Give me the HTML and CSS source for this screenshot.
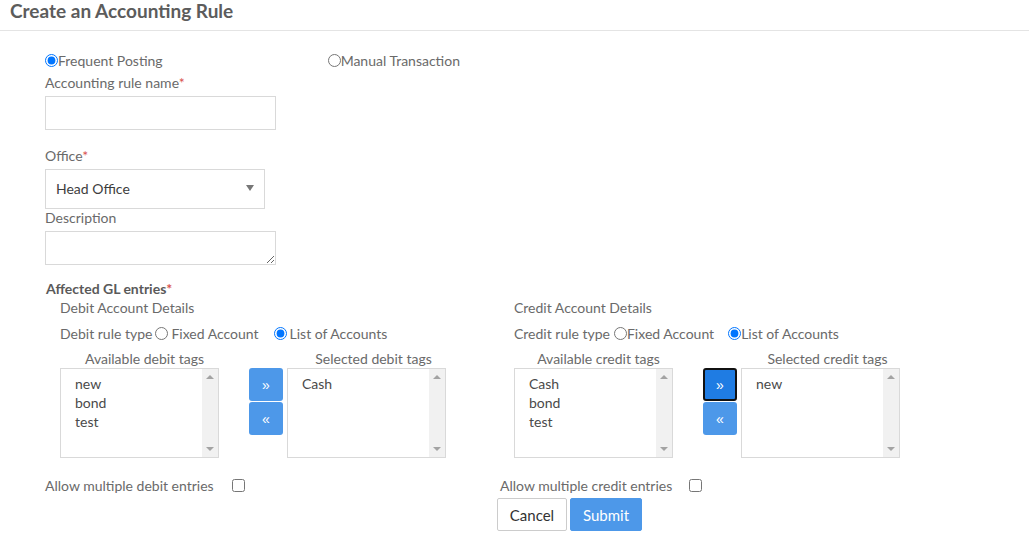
FILE: index.html
```html
<!DOCTYPE html>
<html>
<head>
<meta charset="utf-8">
<link rel="stylesheet" href="styles.css">
</head>
<body>
<header class="page-head"><h1>Create an Accounting Rule</h1></header>
<form class="form">
  <div class="type-row">
    <label class="radio-lbl"><input type="radio" name="t" checked>Frequent Posting</label>
    <label class="radio-lbl manual"><input type="radio" name="t">Manual Transaction</label>
  </div>
  <div class="lbl l-name">Accounting rule name<span class="req">*</span></div>
  <input class="txt" type="text">
  <div class="lbl l-office">Office<span class="req">*</span></div>
  <div class="select"><span>Head Office</span><span class="caret"></span></div>
  <div class="lbl l-desc">Description</div>
  <textarea class="area"></textarea>
  <div class="gl">Affected GL entries<span class="req">*</span></div>
  <div class="sides">
    <div class="side debit">
      <div class="sub">Debit Account Details</div>
      <div class="rule-row">Debit rule type<label class="r"><input type="radio" name="d">Fixed Account</label><label class="r second"><input type="radio" name="d" checked>List of Accounts</label></div>
      <div class="lists">
        <div class="col">
          <div class="cap">Available debit tags</div>
          <div class="box"><div class="items"><div>new</div><div>bond</div><div>test</div></div><div class="sb"><span class="up"></span><span class="dn"></span></div></div>
        </div>
        <div class="btns"><button type="button" class="mv">&raquo;</button><button type="button" class="mv">&laquo;</button></div>
        <div class="col">
          <div class="cap sel">Selected debit tags</div>
          <div class="box"><div class="items"><div>Cash</div></div><div class="sb"><span class="up"></span><span class="dn"></span></div></div>
        </div>
      </div>
    </div>
    <div class="side credit">
      <div class="sub">Credit Account Details</div>
      <div class="rule-row">Credit rule type<label class="r tight"><input type="radio" name="c">Fixed Account</label><label class="r second tight"><input type="radio" name="c" checked>List of Accounts</label></div>
      <div class="lists">
        <div class="col">
          <div class="cap">Available credit tags</div>
          <div class="box"><div class="items"><div>Cash</div><div>bond</div><div>test</div></div><div class="sb"><span class="up"></span><span class="dn"></span></div></div>
        </div>
        <div class="btns"><button type="button" class="mv focus">&raquo;</button><button type="button" class="mv">&laquo;</button></div>
        <div class="col">
          <div class="cap sel">Selected credit tags</div>
          <div class="box"><div class="items"><div>new</div></div><div class="sb"><span class="up"></span><span class="dn"></span></div></div>
        </div>
      </div>
    </div>
  </div>
  <div class="multi">
    <label class="chk debit-chk">Allow multiple debit entries<input type="checkbox"></label>
    <label class="chk credit-chk">Allow multiple credit entries<input type="checkbox"></label>
  </div>
  <div class="actions">
    <button type="button" class="btn cancel">Cancel</button>
    <button type="button" class="btn submit">Submit</button>
  </div>
</form>
</body>
</html>
```
FILE: styles.css
```css
* { box-sizing: border-box; }
body {
  margin: 0;
  font-family: Lato, "Noto Sans", sans-serif;
  font-size: 14px;
  color: #6a6a6a;
  background: #fff;
}
.page-head {
  height: 31px;
  border-bottom: 1px solid #e4e4e4;
  padding: 0 10px;
}
.page-head h1 {
  margin: 0;
  font-size: 19px;
  line-height: 22px;
  font-weight: 700;
  color: #5c5c5c;
}
.form { padding-left: 45px; }
.type-row {
  display: flex;
  margin-top: 19px;
  height: 20px;
  align-items: center;
}
.radio-lbl { display: flex; align-items: center; }
.radio-lbl input { margin: 0; width: 13px; height: 13px; }
.manual { margin-left: 165px; }
.lbl { line-height: 20px; }
.req { color: #d9534f; }
.l-name { margin-top: 3px; }
.txt {
  display: block;
  margin-top: 3px;
  width: 231px;
  height: 34px;
  border: 1px solid #d9d9d9;
  font: inherit;
}
.l-office { margin-top: 16px; }
.select {
  margin-top: 3px;
  width: 220px;
  height: 40px;
  border: 1px solid #d9d9d9;
  display: flex;
  align-items: center;
  justify-content: space-between;
  padding: 0 10px 2px 10px;
  color: #3d3d3d;
}
.caret {
  width: 0; height: 0;
  border-left: 4px solid transparent;
  border-right: 4px solid transparent;
  border-top: 6px solid #777;
}
.l-desc { margin-top: -1px; }
.area {
  display: block;
  margin-top: 3px;
  width: 231px;
  height: 34px;
  border: 1px solid #d9d9d9;
  font: inherit;
}
.gl {
  margin-top: 14px;
  margin-left: 1px;
  line-height: 20px;
  font-weight: 700;
  color: #5a5a5a;
}
.sides { display: flex; }
.debit { width: 469px; padding-left: 15px; }
.credit { padding-left: 0; }
.sub { line-height: 18px; margin-top: 0; }
.rule-row {
  display: flex;
  align-items: center;
  height: 20px;
  margin-top: 6px;
  white-space: nowrap;
}
.r { display: inline-flex; align-items: center; }
.r input { margin: 0 3px 0 3px; width: 13px; height: 13px; }
.r.tight input { margin: 0 0 0 4px; }
.r.second { margin-left: 12px; }
.r.second.tight { margin-left: 10px; }
.lists { display: flex; align-items: flex-start; margin-top: 7px; }
.col { width: 159px; }
.cap { text-align: center; line-height: 18px; padding-left: 10px; }
.cap.sel { padding-left: 14px; }
.box {
  margin-top: 0;
  height: 90px;
  border: 1px solid #d9d9d9;
  display: flex;
  color: #4a4a4a;
}
.items {
  flex: 1;
  padding: 5px 0 0 14px;
  line-height: 19px;
}
.sb {
  width: 16px;
  background: #f1f1f1;
  position: relative;
}
.sb span {
  position: absolute;
  left: 4px;
  width: 0; height: 0;
  border-left: 4px solid transparent;
  border-right: 4px solid transparent;
}
.sb .up { top: 6px; border-bottom: 4px solid #a3a3a3; }
.sb .dn { bottom: 6px; border-top: 4px solid #a3a3a3; }
.btns {
  display: flex;
  flex-direction: column;
  margin: 18px 4px 0 30px;
  gap: 1px;
}
.mv {
  width: 34px;
  height: 33px;
  border: 0;
  border-radius: 3px;
  background: #4d98e9;
  color: #fff;
  font-size: 14px;
  padding: 0;
  line-height: 1;
}
.mv.focus {
  background: #1f7ce3;
  border: 2px solid #111;
}
.multi {
  display: flex;
  margin-top: 17px;
  height: 20px;
  align-items: center;
}
.chk { display: flex; align-items: center; }
.chk input { margin: 0 0 0 18px; width: 13px; height: 13px; }
.credit-chk input { margin-left: 17px; }
.debit-chk { width: 455px; }
.actions {
  display: flex;
  gap: 3px;
  margin: 3px 0 0 452px;
}
.btn {
  height: 33px;
  font: inherit;
  font-size: 15px;
  border-radius: 2px;
  padding: 0 8px;
}
.cancel { background: #fff; border: 1px solid #ccc; color: #333; width: 70px; }
.submit { background: #4d98e9; border: 1px solid #4d98e9; color: #fff; width: 72px; }
```
